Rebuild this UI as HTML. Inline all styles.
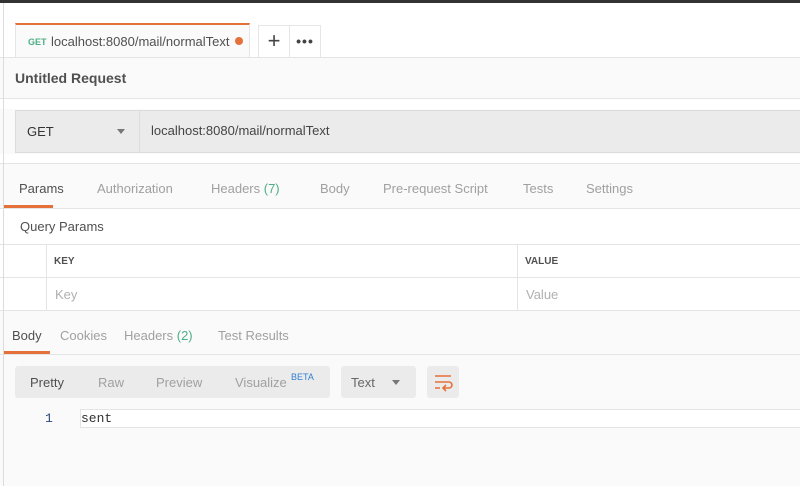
<!DOCTYPE html>
<html><head><style>
*{margin:0;padding:0;box-sizing:border-box}
body{width:800px;height:486px;overflow:hidden;background:#fafafa;font-family:"Liberation Sans",sans-serif;position:relative;color:#505050}
.a{position:absolute;white-space:nowrap}
.hl{position:absolute;left:0;width:800px;height:1px;background:#e4e4e4}
.vl{position:absolute;width:1px;background:#e4e4e4}
.t{font-size:13px;color:#a0a0a0}
</style></head><body>
<div class="a" style="left:0;top:0;width:800px;height:57px;background:#fff"></div>
<div class="a" style="left:0;top:0;width:800px;height:3px;background:#333"></div>
<!-- tab -->
<div class="a" style="left:15px;top:23px;width:235px;height:35px;background:#fafafa;border-top:2px solid #e4703a;border-left:1px solid #e6e6e6;border-right:1px solid #e6e6e6"></div>
<div class="a" style="left:28px;top:37px;font-size:9px;font-weight:bold;color:#4fae86">GET</div>
<div class="a" style="left:51px;top:34px;font-size:13px;color:#505050">localhost:8080/mail/normalText</div>
<div class="a" style="left:235px;top:37px;width:8px;height:8px;border-radius:50%;background:#e4703a"></div>
<div class="a" style="left:258px;top:25px;width:32px;height:32px;border:1px solid #e6e6e6;border-bottom:none;background:#fff;text-align:center;font-size:22px;line-height:30px;color:#444">+</div>
<div class="a" style="left:290px;top:25px;width:31px;height:32px;border:1px solid #e6e6e6;border-left:none;border-bottom:none;background:#fff;text-align:center;font-size:14px;line-height:30px;color:#444;font-weight:bold;letter-spacing:1px">•••</div>
<div class="hl" style="top:57px"></div>
<div class="a" style="left:15px;top:70px;font-size:14px;font-weight:bold;color:#505050">Untitled Request</div>
<div class="hl" style="top:98px"></div>
<div class="a" style="left:0;top:99px;width:800px;height:10px;background:#fff"></div>
<!-- url bar -->
<div class="a" style="left:15px;top:110px;width:800px;height:43px;background:#ebebeb;border:1px solid #dcdcdc"></div>
<div class="vl" style="left:139px;top:110px;height:43px;background:#dcdcdc"></div>
<div class="a" style="left:27px;top:124px;font-size:13px;color:#333">GET</div>
<div class="a" style="left:117px;top:129px;width:0;height:0;border-left:4px solid transparent;border-right:4px solid transparent;border-top:5px solid #777"></div>
<div class="a" style="left:151px;top:123px;font-size:13px;color:#444">localhost:8080/mail/normalText</div>
<div class="a" style="left:0;top:154px;width:800px;height:10px;background:#fff"></div>
<div class="hl" style="top:163px"></div>
<!-- tabs -->
<div class="a t" style="left:19px;top:181px;color:#505050">Params</div>
<div class="a t" style="left:97px;top:181px">Authorization</div>
<div class="a t" style="left:211px;top:181px">Headers <span style="color:#4fae86">(7)</span></div>
<div class="a t" style="left:320px;top:181px">Body</div>
<div class="a t" style="left:383px;top:181px">Pre-request Script</div>
<div class="a t" style="left:523px;top:181px">Tests</div>
<div class="a t" style="left:586px;top:181px">Settings</div>
<div class="a" style="left:3px;top:205px;width:50px;height:3px;background:#e4703a"></div>
<div class="hl" style="top:208px"></div>
<div class="a" style="left:0;top:209px;width:800px;height:101px;background:#fff"></div>
<div class="a" style="left:20px;top:219px;font-size:13px;color:#505050">Query Params</div>
<div class="hl" style="top:244px"></div>
<div class="hl" style="top:277px"></div>
<div class="hl" style="top:310px"></div>
<div class="vl" style="left:46px;top:244px;height:66px"></div>
<div class="vl" style="left:517px;top:244px;height:66px"></div>
<div class="a" style="left:54px;top:256px;font-size:10px;font-weight:bold;color:#505050">KEY</div>
<div class="a" style="left:525px;top:256px;font-size:10px;font-weight:bold;color:#505050">VALUE</div>
<div class="a t" style="left:55px;top:287px;color:#b0b0b0">Key</div>
<div class="a t" style="left:526px;top:287px;color:#b0b0b0">Value</div>
<!-- response -->
<div class="a t" style="left:12px;top:328px;color:#505050">Body</div>
<div class="a t" style="left:60px;top:328px">Cookies</div>
<div class="a t" style="left:124px;top:328px">Headers <span style="color:#4fae86">(2)</span></div>
<div class="a t" style="left:218px;top:328px">Test Results</div>
<div class="a" style="left:3px;top:351px;width:47px;height:3px;background:#e4703a"></div>
<div class="hl" style="top:354px"></div>
<div class="a" style="left:15px;top:366px;width:315px;height:32px;background:#ebebeb;border-radius:3px"></div>
<div class="a t" style="left:30px;top:375px;color:#505050">Pretty</div>
<div class="a t" style="left:98px;top:375px">Raw</div>
<div class="a t" style="left:156px;top:375px">Preview</div>
<div class="a t" style="left:235px;top:375px">Visualize</div>
<div class="a" style="left:291px;top:372px;font-size:9px;color:#2d7fd3">BETA</div>
<div class="a" style="left:341px;top:366px;width:75px;height:32px;background:#ebebeb;border-radius:3px"></div>
<div class="a t" style="left:351px;top:375px;color:#666">Text</div>
<div class="a" style="left:392px;top:380px;width:0;height:0;border-left:4px solid transparent;border-right:4px solid transparent;border-top:5px solid #777"></div>
<div class="a" style="left:427px;top:366px;width:32px;height:32px;background:#ebebeb;border-radius:3px"></div>
<svg class="a" style="left:433px;top:372px" width="20" height="20" viewBox="0 0 20 20" fill="none" stroke="#e4703a" stroke-width="1.6"><path d="M2 4h16M2 10h14a3 3 0 0 1 0 6h-5M13 13l-3 3 3 3M2 16h5"/></svg>
<div class="a" style="left:80px;top:409px;width:730px;height:19px;background:#fff;border:1px solid #e4e4e4"></div>
<div class="a" style="left:45px;top:411px;font-family:'Liberation Mono',monospace;font-size:13px;color:#2a4a7a">1</div>
<div class="a" style="left:81px;top:411px;font-family:'Liberation Mono',monospace;font-size:13px;color:#333">sent</div>
<div class="vl" style="left:3px;top:3px;height:483px;background:#dcdcdc;z-index:5"></div>
</body></html>
